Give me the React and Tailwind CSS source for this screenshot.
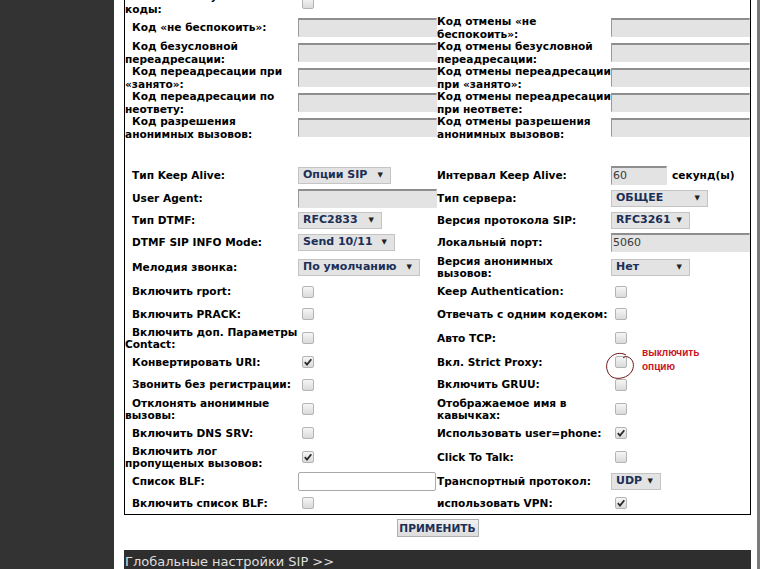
import React from 'react';

const topRows = [
  { l: ['Включить служебные', 'коды:'], li: { type: 'checkbox' } },
  { l: ['Код «не беспокоить»:'], li: { type: 'code' }, r: ['Код отмены «не', 'беспокоить»:'], ri: { type: 'code' } },
  { l: ['Код безусловной', 'переадресации:'], li: { type: 'code' }, r: ['Код отмены безусловной', 'переадресации:'], ri: { type: 'code' } },
  { l: ['Код переадресации при', '«занято»:'], li: { type: 'code' }, r: ['Код отмены переадресации', 'при «занято»:'], ri: { type: 'code' } },
  { l: ['Код переадресации по', 'неответу:'], li: { type: 'code' }, r: ['Код отмены переадресации', 'при неответе:'], ri: { type: 'code' } },
  { l: ['Код разрешения', 'анонимных вызовов:'], li: { type: 'code' }, r: ['Код отмены разрешения', 'анонимных вызовов:'], ri: { type: 'code' } },
];

const rows = [
  { h: 'h-[23px]', l: ['Тип Keep Alive:'], li: { type: 'select', value: 'Опции SIP', w: 'w-[93px]' }, r: ['Интервал Keep Alive:'], ri: { type: 'interval' } },
  { h: 'h-[22px]', l: ['User Agent:'], li: { type: 'code' }, r: ['Тип сервера:'], ri: { type: 'select', value: 'ОБЩЕЕ', w: 'w-[97px]' } },
  { h: 'h-[22px]', l: ['Тип DTMF:'], li: { type: 'select', value: 'RFC2833', w: 'w-[84px]' }, r: ['Версия протокола SIP:'], ri: { type: 'select', value: 'RFC3261', w: 'w-[79px]' } },
  { h: 'h-[23px]', l: ['DTMF SIP INFO Mode:'], li: { type: 'select', value: 'Send 10/11', w: 'w-[97px]' }, r: ['Локальный порт:'], ri: { type: 'code', value: '5060' } },
  { h: 'h-[26px]', l: ['Мелодия звонка:'], li: { type: 'select', value: 'По умолчанию', w: 'w-[122px]' }, r: ['Версия анонимных', 'вызовов:'], ri: { type: 'select', value: 'Нет', w: 'w-[79px]' } },
  { h: 'h-[23px]', l: ['Включить rport:'], li: { type: 'checkbox' }, r: ['Keep Authentication:'], ri: { type: 'checkbox' } },
  { h: 'h-[22px]', l: ['Включить PRACK:'], li: { type: 'checkbox' }, r: ['Отвечать с одним кодеком:'], ri: { type: 'checkbox' } },
  { h: 'h-[26px]', l: ['Включить доп. Параметры', 'Contact:'], li: { type: 'checkbox' }, r: ['Авто TCP:'], ri: { type: 'checkbox' } },
  { h: 'h-[22px]', l: ['Конвертировать URI:'], li: { type: 'checkbox', checked: true }, r: ['Вкл. Strict Proxy:'], ri: { type: 'checkbox', note: true } },
  { h: 'h-[23px]', l: ['Звонить без регистрации:'], li: { type: 'checkbox' }, r: ['Включить GRUU:'], ri: { type: 'checkbox' } },
  { h: 'h-[26px]', l: ['Отклонять анонимные', 'вызовы:'], li: { type: 'checkbox' }, r: ['Отображаемое имя в', 'кавычках:'], ri: { type: 'checkbox' } },
  { h: 'h-[22px]', l: ['Включить DNS SRV:'], li: { type: 'checkbox' }, r: ['Использовать user=phone:'], ri: { type: 'checkbox', checked: true } },
  { h: 'h-[26px]', l: ['Включить лог', 'пропущеных вызовов:'], li: { type: 'checkbox', checked: true }, r: ['Click To Talk:'], ri: { type: 'checkbox' } },
  { h: 'h-[22px]', l: ['Список BLF:'], li: { type: 'text' }, r: ['Транспортный протокол:'], ri: { type: 'select', value: 'UDP', w: 'w-[50px]' } },
  { h: 'h-[22px]', l: ['Включить список BLF:'], li: { type: 'checkbox' }, r: ['использовать VPN:'], ri: { type: 'checkbox', checked: true } },
];

function Checkbox({ checked }) {
  return (
    <div className="ml-[4px] w-[12px] h-[12px] rounded-[2px] border border-[#b4b4b4] bg-gradient-to-b from-[#f6f6f6] to-[#dadada] flex items-center justify-center">
      {checked && (
        <svg width="10" height="10" viewBox="0 0 10 10">
          <path d="M1.8 5.2 L4 7.6 L8.3 2.2" fill="none" stroke="#2a2a2a" strokeWidth="1.8" />
        </svg>
      )}
    </div>
  );
}

function Select({ value, w }) {
  return (
    <div className={`${w} h-[17px] bg-[#e3e3e3] border border-[#c4c4c4] flex items-center justify-between pl-[4px] pr-[7px] text-[#1b2f57] font-bold text-[11px]`}>
      <span className="whitespace-nowrap">{value}</span>
      <span className="text-[7px] text-[#222]">▼</span>
    </div>
  );
}

function CodeInput({ value, w = 'w-full' }) {
  return (
    <div className={`${w} h-[19px] bg-[#e3e3e3] border border-[#e3e3e3] border-t-[#8e8e8e] border-l-[#9a9a9a] border-t-2 flex items-center pl-[1px] text-[11px] text-[#3a3a3a] font-normal`}>
      {value}
    </div>
  );
}

function Field({ f }) {
  if (!f) return <div />;
  if (f.type === 'checkbox') {
    return (
      <div className="relative flex items-center">
        <Checkbox checked={f.checked} />
        {f.note && (
          <>
            <svg className="absolute left-[-7px] top-[-5px]" width="33" height="30" viewBox="0 0 33 30">
              <path d="M22 4 C17 1 9 2 5 8 C1 13 2 22 8 26 C14 29 24 27 28 20 C31 14 29 8 24 6 C22 5 20 6 19 7" fill="none" stroke="#6e1616" strokeWidth="1" />
            </svg>
            <div className="absolute left-[31px] top-[-10px] font-['Liberation_Sans',sans-serif] text-[10px] leading-[14px] font-bold text-[#c8141e]">
              выключить<br />опцию
            </div>
          </>
        )}
      </div>
    );
  }
  if (f.type === 'select') return <Select value={f.value} w={f.w} />;
  if (f.type === 'code') return <CodeInput value={f.value} />;
  if (f.type === 'interval') {
    return (
      <div className="flex items-center">
        <CodeInput value="60" w="w-[56px]" />
        <span className="ml-[5px] whitespace-nowrap">секунд(ы)</span>
      </div>
    );
  }
  return <div className="w-[138px] h-[19px] bg-white border border-[#a9a9a9] rounded-[2px]" />;
}

function Label({ lines, indent }) {
  return (
    <div className="whitespace-nowrap">
      {lines.map((line, i) => (
        <div key={i} className={indent && i === 0 ? 'pl-[7px]' : ''}>{line}</div>
      ))}
    </div>
  );
}

function Row({ row, h }) {
  return (
    <div className={`grid grid-cols-[173px_139px_174px_139px] items-center ${h}`}>
      <Label lines={row.l} indent />
      <Field f={row.li} />
      {row.r ? <Label lines={row.r} /> : <div />}
      <Field f={row.ri} />
    </div>
  );
}

export default function App() {
  return (
    <div className="h-[569px] overflow-hidden flex bg-white font-['DejaVu_Sans',sans-serif] text-[10.6px] leading-[12.5px] font-bold text-black">
      <aside className="w-[114px] shrink-0 bg-[#333333]" />

      <main className="w-[643px] shrink-0 pl-[10px] pr-[6px]">
        {/* SIP account settings */}
        <div className="w-[627px] mt-[-11px] border border-black">
          {topRows.map((row, i) => (
            <Row key={i} row={row} h="h-[25px]" />
          ))}
          <div className="h-[24px]" />
          {rows.map((row, i) => (
            <Row key={i} row={row} h={row.h} />
          ))}
        </div>

        <div className="flex justify-center mt-[4px]">
          <button className="w-[82px] h-[18px] bg-gradient-to-b from-[#f2f2f2] to-[#dcdcdc] border border-[#b0b0b0] text-[10.6px] font-bold text-[#1b2f57]">
            ПРИМЕНИТЬ
          </button>
        </div>

        <div className="mt-[13px] h-[30px] bg-[#2e2e2e] pl-[1px] pt-[4px] text-[13px] leading-[16px] font-normal text-[#dedede]">
          Глобальные настройки SIP &gt;&gt;
        </div>
      </main>

      <div className="w-[3px] shrink-0 bg-[#7a7a7a]" />
    </div>
  );
}
